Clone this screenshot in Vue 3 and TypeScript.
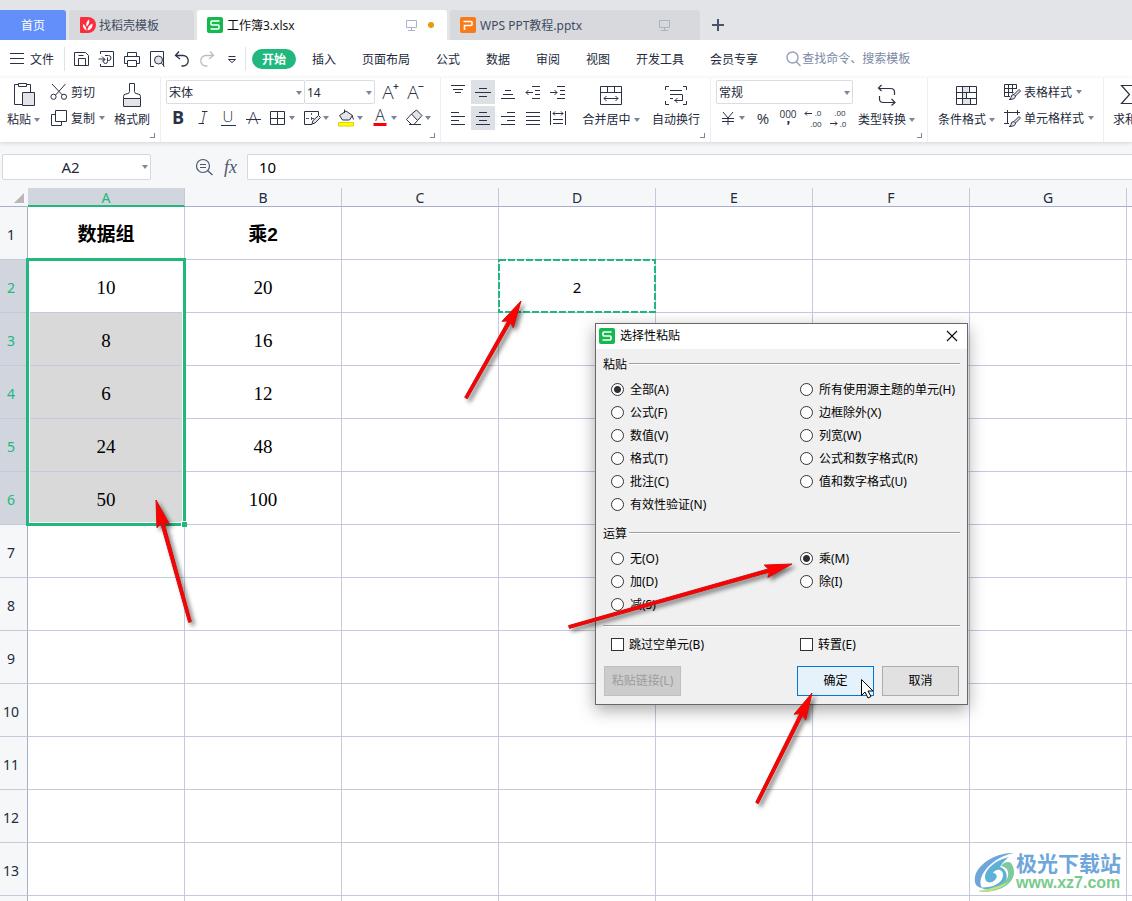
<script setup lang="ts">
import { h, reactive, ref } from 'vue'

type Shape = {
  d?: string
  t?: string
  x?: number
  y?: number
  size?: number
  fill?: string
  stroke?: string
  width?: number
  weight?: number
  italic?: boolean
}

const ink = '#2b3245'
const soft = '#e2e4e8'

const shapes: Record<string, Shape[]> = {
  menu: [{ d: 'M5 6.5h14M5 11.5h14M5 16.5h14' }],
  save: [{ d: 'M4.5 5.5h11l3 3v10h-14zM8.5 18.5v-7h7v7M8.5 8.5h5' }],
  exportPdf: [{ d: 'M5.5 7V4.5h13v15h-13V17M3.5 12h6M7 9.5l2.5 2.5L7 14.5M10 8.5h3.5a2.500 2.500 0 0 1 0 5H12M12.500 10.500v4a2 2 0 1 1-2-2' }],
  print: [{ d: 'M7.5 9V5.5h9V9M7.5 16.5h-3V9.5h15v7h-3' }, { d: 'M7.5 13.5h9v6h-9z' }],
  preview: [
    { d: 'M9 19.5H5.5v-15h13v15' },
    { d: 'M13.5 9a4 4 0 1 1 0 8a4 4 0 1 1 0-8z', fill: soft },
    { d: 'M16.4 16l3.1 3.5' },
  ],
  undo: [{ d: 'M9 4.5L5.5 8.5L10 12M6 8.5h7a5 5 0 0 1 0 10.5h-1.5', width: 1.3 }],
  redo: [{ d: 'M15 4.5L18.5 8.5L14 12M18 8.5h-7a5 5 0 0 0 0 10.5h1.5', stroke: '#b9bdc6', width: 1.3 }],
  more: [{ d: 'M8.5 9.5h7M8.500 12.5l3.500 3l3.500-3z' }],
  search: [{ d: 'M11.5 5a5.5 5.5 0 1 1 0 11a5.5 5.5 0 1 1 0-11zM15.5 15l4 4', stroke: '#94a0b8', width: 1.4 }],
  paste: [
    { d: 'M6.5 1.5h-4v20H10M14.5 1.5h4V9M6.5.5h8v3h-8z' },
    { d: 'M10.5 9.5h12v13h-12z', fill: soft },
  ],
  cut: [{ d: 'M5 4l10.4 11M18.5 4L8.6 15M6.5 14.2a2.6 2.6 0 1 1 0 5.2a2.6 2.6 0 1 1 0-5.2zM17 14.2a2.6 2.6 0 1 1 0 5.2a2.6 2.6 0 1 1 0-5.2z' }],
  copy: [{ d: 'M8.5 8.5h-4v11h10v-4M8.5 4.5h11v11h-11z' }],
  brush: [
    { d: 'M3.5 15.5h17v8h-17z', fill: soft },
    { d: 'M3.500 15.500V13.500q0-2.500 2.500-2.500q3.500 0 3.500-2.500V.5h5V8.500q0 2.500 3.500 2.500q2.500 0 2.500 2.500V15.500' },
  ],
  bold: [{ t: 'B', x: 12, y: 18, size: 18, weight: 700 }],
  italic: [{ t: 'I', x: 12, y: 18, size: 17, weight: 300, italic: true }, { d: 'M11 5.500h5.500M7.500 17.500h5.500' }],
  underline: [{ t: 'U', x: 12, y: 16, size: 15, weight: 300 }, { d: 'M5 19.500h15' }],
  strike: [{ t: 'A', x: 12, y: 18, size: 17, weight: 300 }, { d: 'M5 13.500h15' }],
  borders: [{ d: 'M4.500 5.500h14v13h-14zM11.500 5.500v13M4.500 12.500h14' }],
  drawBorder: [
    { d: 'M12 18.500H4.500v-13h14V9' },
    { d: 'M11.500 7v2M11.500 11v3M6 12.500h3M11 12.500h3', stroke: '#4c566e' },
    { d: 'M12 18l1-3.500l5.500-5l2 2l-5.500 5.500z', fill: soft },
  ],
  bucket: [
    { d: 'M4.500 16.500h15v3.500H4.500z', fill: '#ffff00', stroke: '#d8d800' },
    { d: 'M5.500 9.500l6.500-4.500l6.500 4.500l-3 4.500h-7z', fill: soft },
    { d: 'M10.500 7v-3.500M18 9.500l1.500 4' },
  ],
  fontColor: [{ t: 'A', x: 12, y: 15, size: 16, weight: 300 }, { d: 'M5.500 17h13v3h-13z', fill: '#ff0000', stroke: 'none' }],
  eraser: [
    { d: 'M9.500 8L14.500 4l5.500 5.500l-4.500 5z', fill: soft },
    { d: 'M9.500 8l-5 5.500l5 5h2.500l3.500-4M7 18.500h12' },
  ],
  grow: [{ t: 'A', x: 9, y: 19, size: 19, weight: 300 }, { d: 'M14.500 6.500h5M17 4v5' }],
  shrink: [{ t: 'A', x: 9, y: 19, size: 19, weight: 300 }, { d: 'M14.500 6.500h5' }],
  top: [{ d: 'M5 5.500h14M7 9.500h10M9 12.500h6' }],
  middle: [{ d: 'M8 8.500h8M4 12.500h16M8 16.500h8' }],
  bottom: [{ d: 'M9 10.500h6M7 14.500h10M5 18.500h14' }],
  outdent: [{ d: 'M11 6.500h8M14 10.500h5M14 14.500h5M11 18.500h8M5 12.500h7M7.500 10L5 12.500l2.500 2.500' }],
  indent: [{ d: 'M11 6.500h8M14 10.500h5M14 14.500h5M11 18.500h8M4 12.500h7M8.500 10L11 12.500l-2.500 2.500' }],
  left: [{ d: 'M5 6.500h8M5 10.500h14M5 14.500h8M5 18.500h14' }],
  center: [{ d: 'M8 6.500h8M5 10.500h14M8 14.500h8M5 18.500h14' }],
  right: [{ d: 'M11 6.500h8M5 10.500h14M11 14.500h8M5 18.500h14' }],
  justify: [{ d: 'M5 6.500h14M5 10.500h14M5 14.500h14M5 18.500h14' }],
  distribute: [{ d: 'M4.500 5v14M19.500 5v14M7 7.500h10M9 5.500L7 7.500l2 2M15 5.500l2 2l-2 2M7 13.500h10M7 17.500h10' }],
  merge: [{ d: 'M1.500 3.500h21v18h-21zM1.500 9.500h21M8.500 3.500v6M15.500 3.500v6M5 15.500h14M7.500 13L5 15.500L7.500 18M16.500 13l2.500 2.500l-2.500 2.500' }],
  wrap: [{ d: 'M5 3.500H1.500V7M19 3.500h3.500V7M5 21.500H1.500V18M19 21.500h3.500V18M6 7.500h12M6 11.500h12M6 15.500h3M18.500 11.500v6h-8M13.500 15L11 17.500L13.500 20' }],
  yen: [{ d: 'M7 6l5 6l5-6M6 12.500h12M6 15.500h12M12 12v7' }],
  percent: [{ t: '%', x: 12, y: 18, size: 15, weight: 400 }],
  comma: [{ t: '000', x: 12, y: 12, size: 10 }, { d: 'M11.500 15h2v2l-1 2h-1z', fill: ink, stroke: 'none' }],
  lessDec: [
    { t: '.0', x: 17, y: 10, size: 8 },
    { t: '.00', x: 15, y: 21, size: 8 },
    { d: 'M4 7.500h7M6 5.500L4 7.500l2 2' },
  ],
  moreDec: [
    { t: '.00', x: 14, y: 10, size: 8 },
    { t: '.0', x: 17, y: 21, size: 8 },
    { d: 'M4 17.500h7M9 15.500l2 2l-2 2' },
  ],
  convert: [{ d: 'M6.500 2L3.500 5l3 3M3.500 5.500h12q4 0 4 3.500v3M16.500 16l3.500 3.500l-3.500 3M20 19.500H8.500q-4 0-4-3.500v-3', width: 1.2 }],
  condFormat: [
    { d: 'M7.500 3.500h6v6h-6zM7.500 9.500h4v6h-4zM7.500 15.500h8v6h-8z', fill: soft, stroke: 'none' },
    { d: 'M1.500 3.500h20v18h-20zM1.500 9.500h20M1.500 15.500h20M7.500 3.500v18M14.500 3.500v6M11.500 9.500v6M15.500 15.500v6' },
  ],
  tableStyle: [
    { d: 'M10 16.500H4.500v-12h12V9M4.500 8.500h12M4.500 12.500h9M8.500 4.500v12M12.500 4.500v9' },
    { d: 'M9 19.500q2 0 2-2q0-3 3-3l1.500 1.500q0 3.500-6.500 3.500M14 14.500l5-5l1.500 1.500l-5 5', fill: soft },
  ],
  cellStyle: [
    { d: 'M4 6.500h16M7.500 4v13.500M4 17.500h5M17.500 4v5' },
    { d: 'M9 20.500q2 0 2-2q0-3 3-3l1.500 1.500q0 3.500-6.500 3.500M14 15.500l5-5l1.500 1.500l-5 5', fill: soft },
  ],
  sum: [{ d: 'M19.500 6V2.500h-16l8 9l-8 9h16V17', width: 1.2 }],
  zoomOut: [{ d: 'M11 4.500a6.500 6.500 0 1 1 0 13a6.500 6.500 0 1 1 0-13zM15.500 15.500l5 4.500M8 9.500h6M8 12.500h6', stroke: '#4c566e', width: 1.2 }],
  monitor: [{ d: 'M6.500 7.500h10v7h-10zM11.500 14.500v3M8 17.500h7', stroke: '#a9b2c9' }],
  plus: [{ d: 'M6 12h12M12 6v12', stroke: '#47526b', width: 2 }],
}

function Icon(props: { name: string }) {
  return h(
    'svg',
    { viewBox: '0 0 24 24', width: 24, height: 24, 'aria-hidden': 'true' },
    shapes[props.name].map((s) =>
      s.t
        ? h(
            'text',
            {
              x: s.x,
              y: s.y,
              'text-anchor': 'middle',
              'font-size': s.size,
              'font-weight': s.weight ?? 400,
              'font-style': s.italic ? 'italic' : 'normal',
              'font-family': '"Open Sans", "Noto Sans", sans-serif',
              fill: ink,
            },
            s.t,
          )
        : h('path', { d: s.d, fill: s.fill ?? 'none', stroke: s.stroke ?? ink, 'stroke-width': s.width ?? 1 }),
    ),
  )
}
Icon.props = ['name']

const quick = [
  ['save', '保存'],
  ['exportPdf', '输出为PDF'],
  ['print', '打印'],
  ['preview', '打印预览'],
  ['undo', '撤销'],
  ['redo', '恢复'],
  ['more', '更多'],
]
const menus = ['插入', '页面布局', '公式', '数据', '审阅', '视图', '开发工具', '会员专享']
const plainFont = ['bold', 'italic', 'underline', 'strike']
const caretFont = ['borders', 'drawBorder', 'bucket', 'fontColor', 'eraser']
const alignTop = ['top', 'middle', 'bottom', 'outdent', 'indent']
const alignLow = ['left', 'center', 'right', 'justify', 'distribute']
const numberTools = ['percent', 'comma', 'lessDec', 'moreDec']

const columns = ['A', 'B', 'C', 'D', 'E', 'F', 'G', 'H']
const cells: Record<string, string> = {
  A1: '数据组', B1: '乘2',
  A2: '10', B2: '20', D2: '2',
  A3: '8', B3: '16',
  A4: '6', B4: '12',
  A5: '24', B5: '48',
  A6: '50', B6: '100',
}
function cellClass(col: string, row: number) {
  return {
    heading: row === 1,
    sans: col === 'D',
    shaded: col === 'A' && row > 2 && row < 7,
  }
}

const pasteLeft = ['全部(A)', '公式(F)', '数值(V)', '格式(T)', '批注(C)', '有效性验证(N)']
const pasteRight = ['所有使用源主题的单元(H)', '边框除外(X)', '列宽(W)', '公式和数字格式(R)', '值和数字格式(U)']
const opLeft = ['无(O)', '加(D)', '减(S)']
const opRight = ['乘(M)', '除(I)']
const choice = reactive({ paste: '全部(A)', op: '乘(M)' })
const search = ref('')
const formula = ref('10')
const nameBox = ref('A2')

function arrow(x1: number, y1: number, x2: number, y2: number) {
  const len = Math.hypot(x2 - x1, y2 - y1)
  const ux = (x2 - x1) / len
  const uy = (y2 - y1) / len
  const at = (back: number, side: number) =>
    `${(x2 - ux * back - uy * side).toFixed(1)},${(y2 - uy * back + ux * side).toFixed(1)}`
  return [at(0, 0), at(27, 6.5), at(24, 1.7), at(len, 1.5), at(len, -1.5), at(24, -1.7), at(27, -6.5)].join(' ')
}
const arrows = [
  arrow(466, 398, 521, 301),
  arrow(190, 622, 156, 500),
  arrow(569, 627, 792, 564),
  arrow(757, 803, 812, 693),
]
</script>

<template>
  <div class="app">
    <header class="tabs">
      <button class="tab home"><span class="txt">首页</span></button>
      <button class="tab docer">
        <svg width="16" height="16" viewBox="0 0 16 16">
          <path d="M1 0h7a8 8 0 0 1 0 16H1a1 1 0 0 1-1-1V1a1 1 0 0 1 1-1z" fill="#fb2d3c" />
          <path d="M6.500 13.500C3.500 12 2.500 9.500 3 7C5.500 8.500 6.500 10.500 6.500 13.500zM6.500 9.500C5.500 6.500 7 4 9 2.500C10 6 8.500 8 6.500 9.500zM7.500 13.500C7.500 10 9.500 8 12.500 6.500C13 9.500 11.500 12.500 7.500 13.500z" fill="#fff" />
        </svg>
        <span class="txt">找稻壳模板</span>
      </button>
      <button class="tab doc active">
        <svg width="16" height="16" viewBox="0 0 16 16">
          <rect width="16" height="16" rx="2" fill="#13b94c" />
          <path d="M12.500 4H5a1 1 0 0 0-1 1V7a1 1 0 0 0 1 1h6a1 1 0 0 1 1 1v2a1 1 0 0 1-1 1H3.500" fill="none" stroke="#fff" stroke-width="1.600" />
        </svg>
        <span class="grow txt">工作簿3.xlsx</span>
        <Icon name="monitor" />
        <i class="dot"></i>
      </button>
      <button class="tab doc">
        <svg width="16" height="16" viewBox="0 0 16 16">
          <rect width="16" height="16" rx="2" fill="#f97a16" />
          <path d="M4.500 13V8.500H11a1 1 0 0 0 1-1v-2a1 1 0 0 0-1-1H3.500" fill="none" stroke="#fff" stroke-width="1.600" />
        </svg>
        <span class="grow txt">WPS PPT教程.pptx</span>
        <Icon name="monitor" />
        <i class="dot none"></i>
      </button>
      <button class="add" aria-label="新建"><Icon name="plus" /></button>
    </header>

    <div class="menubar">
      <button class="file"><Icon name="menu" /><span class="txt">文件</span></button>
      <i class="sep"></i>
      <div class="quick">
        <button v-for="q in quick" :key="q[0]" :aria-label="q[1]"><Icon :name="q[0]" /></button>
      </div>
      <i class="sep"></i>
      <nav>
        <button class="pill">开始</button>
        <button v-for="m in menus" :key="m" class="item">{{ m }}</button>
      </nav>
      <label class="search"><Icon name="search" /><input v-model="search" placeholder="查找命令、搜索模板" aria-label="查找命令、搜索模板" /></label>
    </div>

    <div class="ribbon">
      <section class="group clip">
        <button class="big paste"><Icon name="paste" /><span class="cap">粘贴<b class="caret"></b></span></button>
        <div class="stack">
          <button class="line"><Icon name="cut" /><span class="txt">剪切</span></button>
          <button class="line"><Icon name="copy" /><span class="txt">复制</span><b class="caret"></b></button>
        </div>
        <button class="big painter"><Icon name="brush" /><span class="cap">格式刷</span></button>
        <i class="corner"></i>
      </section>

      <section class="group font">
        <div class="stack">
          <div class="row">
            <span class="combo name"><select aria-label="字体"><option>宋体</option></select><b class="caret"></b></span>
            <span class="combo size"><select aria-label="字号"><option>14</option></select><b class="caret"></b></span>
            <button class="tool" aria-label="增大字号"><Icon name="grow" /></button>
            <button class="tool" aria-label="减小字号"><Icon name="shrink" /></button>
          </div>
          <div class="row">
            <button v-for="t in plainFont" :key="t" class="tool" :aria-label="t"><Icon :name="t" /></button>
            <button v-for="t in caretFont" :key="t" class="tool wide" :aria-label="t"><Icon :name="t" /><b class="caret"></b></button>
          </div>
        </div>
        <i class="corner"></i>
      </section>

      <section class="group align">
        <div class="stack">
          <div class="row">
            <button v-for="t in alignTop" :key="t" class="tool" :class="{ on: t === 'middle' }" :aria-label="t"><Icon :name="t" /></button>
          </div>
          <div class="row">
            <button v-for="t in alignLow" :key="t" class="tool" :class="{ on: t === 'center' }" :aria-label="t"><Icon :name="t" /></button>
          </div>
        </div>
        <button class="big merge"><Icon name="merge" /><span class="cap">合并居中<b class="caret"></b></span></button>
        <button class="big"><Icon name="wrap" /><span class="cap">自动换行</span></button>
        <i class="corner"></i>
      </section>

      <section class="group number">
        <div class="stack">
          <div class="row">
            <span class="combo format"><select aria-label="数字格式"><option>常规</option></select><b class="caret"></b></span>
          </div>
          <div class="row">
            <button class="tool wide" aria-label="货币"><Icon name="yen" /><b class="caret"></b></button>
            <button v-for="t in numberTools" :key="t" class="tool" :aria-label="t"><Icon :name="t" /></button>
          </div>
        </div>
        <button class="big"><Icon name="convert" /><span class="cap">类型转换<b class="caret"></b></span></button>
        <i class="corner"></i>
      </section>

      <section class="group style">
        <button class="big"><Icon name="condFormat" /><span class="cap">条件格式<b class="caret"></b></span></button>
        <div class="stack">
          <button class="line"><Icon name="tableStyle" /><span class="txt">表格样式</span><b class="caret"></b></button>
          <button class="line"><Icon name="cellStyle" /><span class="txt">单元格样式</span><b class="caret"></b></button>
        </div>
      </section>

      <section class="group total">
        <button class="big"><Icon name="sum" /><span class="cap">求和<b class="caret"></b></span></button>
      </section>
    </div>

    <div class="formula">
      <span class="namebox"><input v-model="nameBox" aria-label="名称框" /><b class="caret"></b></span>
      <button class="zoom" aria-label="浏览公式结果"><Icon name="zoomOut" /></button>
      <button class="fx" aria-label="插入函数">fx</button>
      <input v-model="formula" class="value" aria-label="编辑栏" />
    </div>

    <main class="sheet">
      <table>
        <colgroup>
          <col class="index" />
          <col v-for="c in columns" :key="c" />
        </colgroup>
        <thead>
          <tr>
            <th class="all"><i></i></th>
            <th v-for="c in columns" :key="c" scope="col" :class="{ picked: c === 'A' }">{{ c }}</th>
          </tr>
        </thead>
        <tbody>
          <tr v-for="r in 13" :key="r">
            <th scope="row" :class="{ picked: r > 1 && r < 7 }">{{ r }}</th>
            <td v-for="c in columns" :key="c" :class="cellClass(c, r)">{{ cells[c + r] }}</td>
          </tr>
          <tr>
            <th></th>
            <td v-for="c in columns" :key="c"></td>
          </tr>
        </tbody>
      </table>
      <div class="selection"><i></i></div>
      <svg class="marching" width="158" height="54"><rect x="1" y="1" width="156" height="52" /></svg>

      <div class="watermark">
        <svg width="42" height="42" viewBox="0 0 42 42">
          <path d="M41 2C24 1 4 13 2 26C1 32 3 36 9 37C5 30 9 21 18 13C25 7 32 4 41 2z" fill="#6ea6dc" />
          <path d="M36 6C23 9 12 18 12 26C12 32 18 33 22 29C25 26 24 22 20 22C24 16 31 19 30 25C29 33 18 37 8 36.500C14 41 26 38 31 33C36 27 34 18 27 16C30 11 33 8 36 6z" fill="#5fb0d6" />
          <path d="M38 12C43 19 42 28 34 34C26 40 14 42 5 40C20 39 33 33 35 25C36 19 33 16 28 15C31 11 35 10 38 12z" fill="#7ccaa0" />
          <path d="M35 31C28 39 14 42 5 40C11 39 16 38 20 36.500C26 35 31 33 35 31z" fill="#c5e07c" />
        </svg>
        <div><strong>极光下载站</strong><span>www.xz7.com</span></div>
      </div>
    </main>

    <div class="dialog" role="dialog" aria-labelledby="dialog-title">
      <div class="title">
        <svg width="16" height="16" viewBox="0 0 16 16">
          <rect width="16" height="16" rx="2" fill="#13b94c" />
          <path d="M12.500 4H5a1 1 0 0 0-1 1V7a1 1 0 0 0 1 1h6a1 1 0 0 1 1 1v2a1 1 0 0 1-1 1H3.500" fill="none" stroke="#fff" stroke-width="1.600" />
        </svg>
        <span id="dialog-title">选择性粘贴</span>
        <button aria-label="关闭"><svg width="12" height="12" viewBox="0 0 12 12"><path d="M1 1l10 10M11 1L1 11" fill="none" stroke="#111" stroke-width="1.200" /></svg></button>
      </div>
      <div class="body">
        <div class="legend"><span class="txt">粘贴</span></div>
        <div class="options" role="radiogroup" aria-label="粘贴">
          <div>
            <label v-for="o in pasteLeft" :key="o"><input v-model="choice.paste" type="radio" name="paste" :value="o" />{{ o }}</label>
          </div>
          <div>
            <label v-for="o in pasteRight" :key="o"><input v-model="choice.paste" type="radio" name="paste" :value="o" />{{ o }}</label>
          </div>
        </div>
        <div class="legend second"><span class="txt">运算</span></div>
        <div class="options" role="radiogroup" aria-label="运算">
          <div>
            <label v-for="o in opLeft" :key="o"><input v-model="choice.op" type="radio" name="op" :value="o" />{{ o }}</label>
          </div>
          <div>
            <label v-for="o in opRight" :key="o"><input v-model="choice.op" type="radio" name="op" :value="o" />{{ o }}</label>
          </div>
        </div>
        <hr />
        <div class="options checks">
          <label><input type="checkbox" />跳过空单元(B)</label>
          <label><input type="checkbox" />转置(E)</label>
        </div>
        <div class="actions">
          <button disabled>粘贴链接(L)</button>
          <i></i>
          <button class="primary">确定</button>
          <button>取消</button>
        </div>
      </div>
    </div>

    <svg class="overlay" aria-hidden="true">
      <polygon v-for="a in arrows" :key="a" :points="a" class="arrow" />
      <path class="cursor" d="M861.500 679.500v16l3.500-3.500l3 6l3-1.500l-3-5.500h5z" />
    </svg>
  </div>
</template>

<style>
body {
  margin: 0;
}
</style>

<style scoped>
.app {
  position: relative;
  display: flex;
  flex-direction: column;
  height: 100vh;
  overflow: hidden;
  background: #fff;
  color: #232a3b;
  font: 12px/16px "Noto Sans", "Noto Sans CJK SC", sans-serif;
}
button,
input,
select {
  box-sizing: border-box;
  margin: 0;
  padding: 0;
  border: 0;
  background: none;
  color: inherit;
  font: inherit;
  outline: none;
}
svg {
  flex: none;
  display: block;
}
.txt,
.item,
.pill {
  padding-top: 2px;
}
.caret {
  flex: none;
  width: 0;
  height: 0;
  border: 3px solid transparent;
  border-top: 4px solid #7b859b;
  border-bottom: 0;
}

.tabs {
  flex: none;
  display: flex;
  align-items: flex-end;
  gap: 3px;
  height: 40px;
  background: #e2e4e8;
}
.tab {
  display: flex;
  align-items: center;
  gap: 4px;
  height: 30px;
  border-radius: 3px 3px 0 0;
  background: #d7d9dd;
  color: #414b62;
  white-space: nowrap;
}
.tab.home {
  justify-content: center;
  width: 66px;
  border-radius: 0 3px 0 0;
  background: #638ffb;
  color: #fff;
}
.tab.docer {
  width: 125px;
  padding-left: 11px;
  gap: 3px;
}
.tab.doc {
  width: 250px;
  padding: 0 13px 0 10px;
}
.tab.active {
  background: #fff;
  color: #111;
}
.grow {
  flex: 1;
  text-align: left;
}
.dot {
  width: 6px;
  height: 6px;
  border-radius: 50%;
  background: #e69a0c;
}
.dot.none {
  background: none;
}
.add {
  height: 30px;
  padding: 0 3px;
}

.menubar {
  flex: none;
  display: flex;
  align-items: center;
  height: 38px;
  white-space: nowrap;
}
.file {
  display: flex;
  align-items: center;
  width: 64px;
  padding-left: 5px;
  gap: 1px;
}
.sep {
  flex: none;
  width: 1px;
  height: 24px;
  background: #dfe2e7;
}
.quick {
  display: flex;
  gap: 1px;
  box-sizing: border-box;
  padding-left: 5px;
  width: 180px;
}
nav {
  display: flex;
  align-items: center;
  padding-left: 6px;
}
.pill {
  width: 44px;
  height: 20px;
  margin-right: 3px;
  border-radius: 10px;
  background: #20b87c;
  color: #fff;
  font-weight: 700;
}
.item {
  padding-left: 13px;
  padding-right: 13px;
}
.search {
  flex: 1;
  display: flex;
  align-items: center;
  padding-left: 10px;
}
.search input {
  flex: 1;
  min-width: 0;
  margin-left: -3px;
}
.search input::placeholder {
  color: #7b88a6;
  opacity: 1;
}

.ribbon {
  position: relative;
  z-index: 1;
  flex: none;
  display: flex;
  height: 64px;
  background: #fff;
  box-shadow: 0 1px 4px rgba(40, 50, 70, 0.18);
  white-space: nowrap;
}
.group {
  position: relative;
  flex: none;
  display: flex;
  align-items: flex-start;
  box-sizing: border-box;
  padding-top: 1px;
  border-right: 1px solid #eceef1;
}
.clip {
  width: 161px;
  padding-left: 5px;
}
.font {
  width: 280px;
  padding-left: 5px;
}
.align {
  width: 270px;
  padding-left: 5px;
  gap: 11px;
}
.number {
  width: 217px;
  padding-left: 5px;
}
.style {
  width: 176px;
  padding-left: 10px;
}
.total {
  width: 80px;
  padding-left: 9px;
}
.corner {
  position: absolute;
  right: 5px;
  bottom: 4px;
  width: 4px;
  height: 4px;
  border: solid #7b859b;
  border-width: 0 1px 1px 0;
}
.big {
  display: flex;
  flex-direction: column;
  align-items: center;
  padding-top: 4px;
}
.cap {
  display: flex;
  align-items: center;
  gap: 3px;
  line-height: 26px;
}
.paste {
  width: 37px;
}
.painter {
  margin-left: 9px;
}
.clip .stack {
  margin-left: 5px;
}
.merge {
  width: 60px;
}
.number .big {
  margin-left: 5px;
}
.style .stack {
  margin-left: 5px;
}
.line {
  display: flex;
  align-items: center;
  height: 26px;
}
.line .caret {
  margin-left: 4px;
}
.row {
  display: flex;
  align-items: center;
  height: 26px;
  gap: 1px;
}
.tool {
  display: flex;
  align-items: center;
  justify-content: center;
  width: 24px;
  height: 24px;
}
.tool.on {
  background: #dde1e6;
}
.tool.wide {
  justify-content: flex-start;
  width: 33px;
}
.number .tool.wide {
  width: 34px;
}
.tool.wide .caret {
  margin-left: -1px;
}
.combo {
  position: relative;
  display: flex;
  box-sizing: border-box;
  height: 24px;
  border: 1px solid #d9dce3;
  border-radius: 2px;
}
.combo select {
  width: 100%;
  padding: 2px 0 0 2px;
  appearance: none;
}
.combo .caret,
.namebox .caret {
  position: absolute;
  top: 10px;
  right: 2px;
}
.combo.name {
  width: 139px;
}
.combo.size {
  width: 71px;
  margin-left: -2px;
  margin-right: 3px;
}
.combo.format {
  width: 137px;
}

.formula {
  flex: none;
  display: flex;
  align-items: center;
  height: 46px;
  box-sizing: border-box;
  padding: 4px 0 0 2px;
  background: #f5f7f9;
  font-size: 15px;
}
.namebox {
  position: relative;
  box-sizing: border-box;
  width: 149px;
  height: 26px;
  border: 1px solid #d5d8de;
  border-radius: 2px;
  background: #fff;
}
.namebox input {
  width: 135px;
  height: 24px;
  text-align: center;
}
.zoom {
  margin-left: 41px;
}
.fx {
  width: 29px;
  margin-right: 2px;
  color: #4c566e;
  font: italic 18px/24px "Liberation Serif", serif;
}
.value {
  flex: 1;
  height: 26px;
  padding-left: 11px;
  border: 1px solid #d5d8de;
  border-right: 0;
  border-radius: 2px 0 0 2px;
  background: #fff;
  color: #000;
}

.sheet {
  position: relative;
  flex: 1;
  min-height: 0;
  overflow: hidden;
}
table {
  width: 1284px;
  table-layout: fixed;
  border-collapse: separate;
  border-spacing: 0;
  color: #000;
}
.index {
  width: 28px;
}
th,
td {
  box-sizing: border-box;
  height: 53px;
  padding: 0;
  border-right: 1px solid #c4c9dc;
  border-bottom: 1px solid #c4c9dc;
  text-align: center;
  vertical-align: middle;
}
thead th {
  height: 19px;
  padding-top: 2px;
  border-bottom-color: #a9aec8;
  background: #f5f7f9;
  color: #232a3b;
  font-size: 14px;
  font-weight: 400;
  line-height: 16px;
}
thead th.picked {
  border-bottom: 2px solid #20b87c;
  background: #d1d5dd;
  color: #20b87c;
  line-height: 15px;
}
tbody th {
  padding: 3px 5px 0 0;
  border-right-color: #a9aec8;
  background: #f5f7f9;
  color: #232a3b;
  font-size: 14px;
  font-weight: 400;
}
tbody th.picked {
  background: #d1d5dd;
  color: #20b87c;
}
.all {
  border-right-color: transparent;
}
.all i {
  display: block;
  width: 0;
  height: 0;
  margin-left: 14px;
  border-left: 10px solid transparent;
  border-bottom: 10px solid #b8b8b8;
}
td {
  padding-top: 4px;
  font: 19px/24px "Liberation Serif", serif;
}
td.heading {
  font: bold 19px/24px "Liberation Sans", "Noto Sans CJK SC", sans-serif;
}
td.sans {
  padding-top: 1px;
  font: 15px/24px "Noto Sans", sans-serif;
}
td.shaded {
  background: #d9d9d9;
}
.selection {
  position: absolute;
  left: 26px;
  top: 70px;
  width: 154px;
  height: 262px;
  border: 3px solid #20b87c;
  box-shadow: inset 0 0 0 1px #fff;
}
.selection i {
  position: absolute;
  right: -4px;
  bottom: -4px;
  width: 5px;
  height: 5px;
  border: solid #fff;
  border-width: 1px 0 0 1px;
  background: #20b87c;
}
.marching {
  position: absolute;
  left: 498px;
  top: 71px;
}
.marching rect {
  fill: none;
  stroke: #20b87c;
  stroke-width: 2;
  stroke-dasharray: 7 2;
}
.watermark {
  position: absolute;
  right: 11px;
  bottom: 8px;
  display: flex;
  align-items: center;
  gap: 1px;
}
.watermark strong {
  display: block;
  color: #6ea6dc;
  font: 700 21px/22px "Noto Sans CJK SC", sans-serif;
}
.watermark span {
  display: block;
  color: #78cb8e;
  font: 700 16px/20px "Liberation Sans", sans-serif;
}

.dialog {
  position: absolute;
  left: 595px;
  top: 323px;
  width: 371px;
  border: 1px solid #686868;
  background: #f0f0f0;
  box-shadow: 0 5px 16px rgba(0, 0, 0, 0.35);
  color: #000;
}
.title {
  display: flex;
  align-items: center;
  gap: 5px;
  box-sizing: border-box;
  height: 25px;
  padding: 0 9px 1px 3px;
  background: #fff;
}
.title span {
  flex: 1;
}
.body {
  padding: 5px 7px 8px;
}
.legend {
  display: flex;
  align-items: center;
  gap: 2px;
  height: 20px;
  margin-bottom: 4px;
}
.legend.second {
  margin-top: 7px;
}
.legend::after {
  content: "";
  flex: 1;
  height: 1px;
  border-bottom: 1px solid #fff;
  background: #a0a0a0;
}
.options {
  display: grid;
  grid-template-columns: 189px 1fr;
  padding-left: 8px;
}
.options label {
  display: flex;
  align-items: center;
  gap: 6px;
  height: 23px;
  white-space: nowrap;
}
.checks label {
  gap: 5px;
}
.options input {
  flex: none;
  width: 13px;
  height: 13px;
  border: 1px solid #333;
  background: #fff;
  appearance: none;
}
.options input[type="radio"] {
  border-radius: 50%;
}
.options input[type="radio"]:checked {
  background: radial-gradient(circle, #2b3036 3px, #fff 4px);
}
.options input[type="checkbox"]:checked {
  box-shadow: inset 0 0 0 3px #fff;
  background: #333;
}
hr {
  height: 1px;
  margin: 9px 0 6px;
  border: 0;
  border-bottom: 1px solid #fff;
  background: #a0a0a0;
}
.actions {
  display: flex;
  gap: 8px;
  margin-top: 10px;
  padding: 0 1px;
}
.actions i {
  flex: 1;
}
.actions button {
  width: 77px;
  height: 30px;
  border: 1px solid #adadad;
  background: #e1e1e1;
}
.actions button:disabled {
  border-color: #bfbfbf;
  background: #ccc;
  color: #9c9c9c;
}
.actions .primary {
  border-color: #0078d7;
  background: #e5f1fb;
}

.overlay {
  position: absolute;
  inset: 0;
  z-index: 2;
  width: 100%;
  height: 100%;
  pointer-events: none;
}
.arrow {
  fill: #ff0000;
  stroke: #d01010;
  stroke-width: 1;
  stroke-linejoin: round;
  filter: drop-shadow(3px 3px 2px rgba(0, 0, 0, 0.5));
}
.cursor {
  fill: #fff;
  stroke: #000;
}
</style>
